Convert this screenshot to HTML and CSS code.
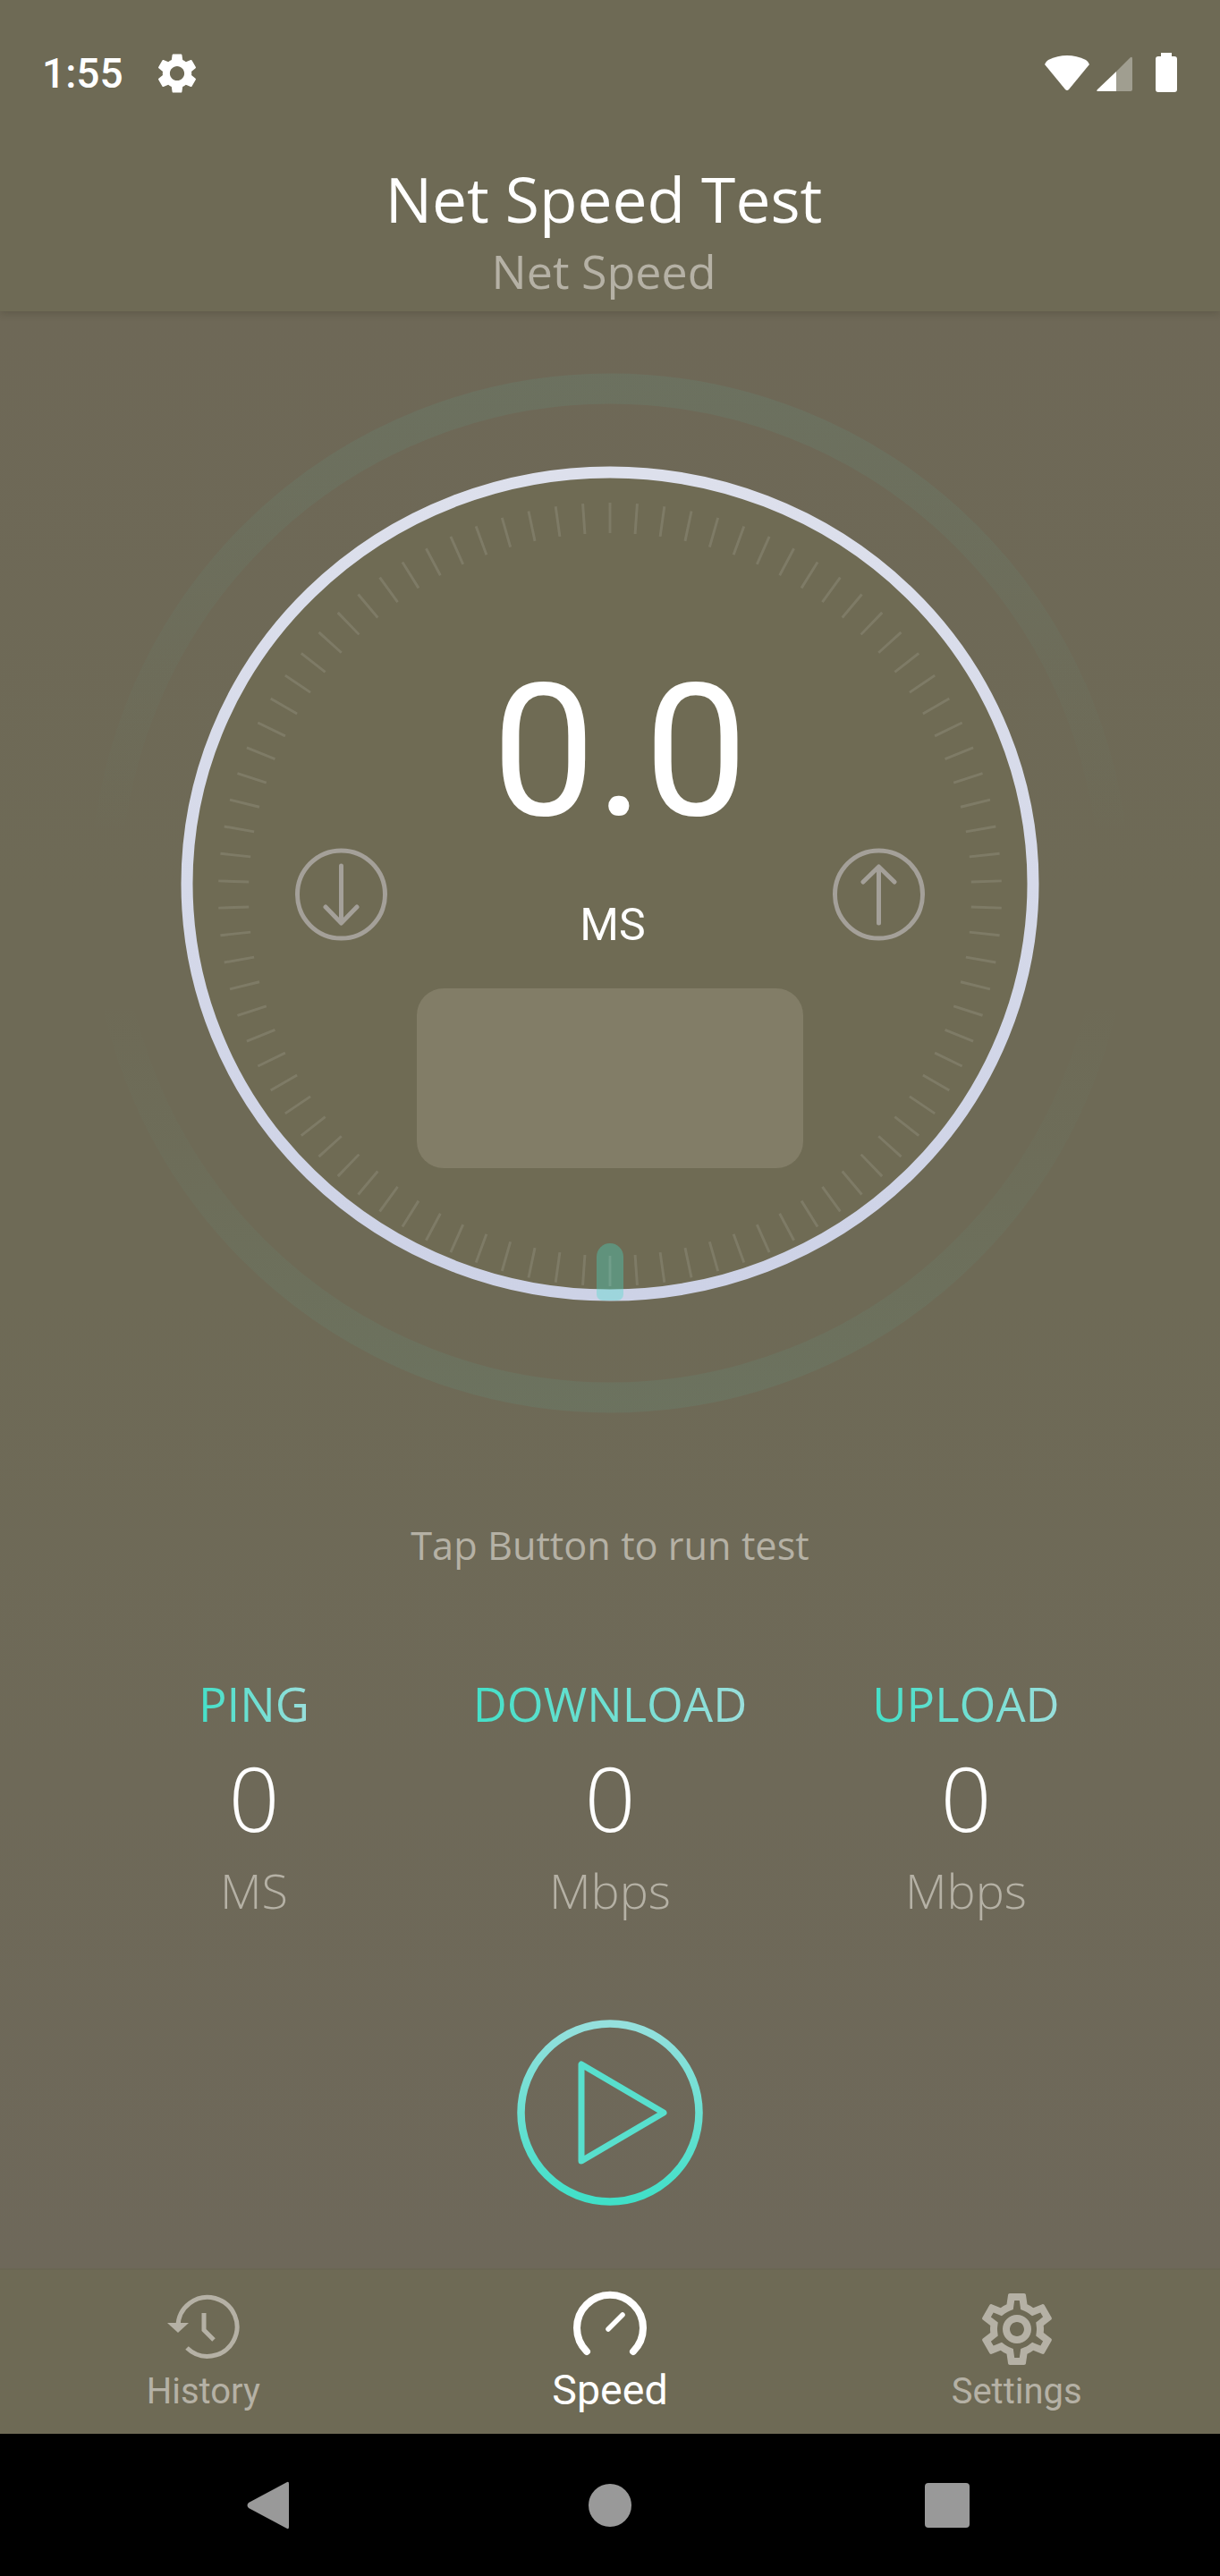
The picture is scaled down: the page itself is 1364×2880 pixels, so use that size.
FILE: index.html
```html
<!DOCTYPE html>
<html lang="en">

<head>
    <meta charset="UTF-8">
    <meta name="viewport" content="width=device-width, initial-scale=1.0">
    <title>Net Speed Test</title>
    <link rel="stylesheet" href="styles.css">
</head>

<body>

    <header class="topbar">
        <div class="status">
            <span class="time">1:55</span>
            <svg class="status-gear" viewBox="0 0 24 24">
                <path fill="#fff" d="M19.14 12.94c.04-.3.06-.61.06-.94 0-.32-.02-.64-.07-.94l2.03-1.58c.18-.14.23-.41.12-.61l-1.92-3.32c-.12-.22-.37-.29-.59-.22l-2.39.96c-.5-.38-1.03-.7-1.62-.94l-.36-2.54c-.04-.24-.24-.41-.48-.41h-3.84c-.24 0-.43.17-.47.41l-.36 2.54c-.59.24-1.13.57-1.62.94l-2.39-.96c-.22-.08-.47 0-.59.22L2.74 8.87c-.12.21-.08.47.12.61l2.03 1.58c-.05.3-.09.63-.09.94s.02.64.07.94l-2.03 1.58c-.18.14-.23.41-.12.61l1.92 3.32c.12.22.37.29.59.22l2.39-.96c.5.38 1.03.7 1.62.94l.36 2.54c.05.24.24.41.48.41h3.84c.24 0 .44-.17.47-.41l.36-2.54c.59-.24 1.13-.56 1.62-.94l2.39.96c.22.08.47 0 .59-.22l1.92-3.32c.12-.22.07-.47-.12-.61l-2.01-1.58zM12 15.6c-1.98 0-3.6-1.62-3.6-3.6s1.62-3.6 3.6-3.6 3.6 1.62 3.6 3.6-1.62 3.6-3.6 3.6z" />
            </svg>
            <svg class="status-icons" viewBox="0 0 150 46">
                <path fill="#fff" d="M1 13Q2 10 5 8Q26 -2 47 8Q50 10 51 13L28 41Q26 43 24 41Z" />
                <path fill="#fff" fill-opacity=".35" d="M81 21L96 6Q99 3 99 7V41Q99 43 97 43H81Z" />
                <path fill="#fff" d="M81 21V43H61Q58 43 60 41Z" />
                <path fill="#fff" d="M131 0H143V4H146Q149 4 149 7V41Q149 44 146 44H128Q125 44 125 41V7Q125 4 128 4H131Z" />
            </svg>
        </div>
        <h1 class="title">Net Speed Test</h1>
        <p class="subtitle">Net Speed</p>
    </header>

    <main class="content">
        <section class="gauge">
            <svg class="dial" viewBox="0 348 1364 1300">
                <defs>
                    <linearGradient id="halo" x1="0" y1="0" x2="0" y2="1">
                        <stop offset="0" stop-color="#55c8b4" stop-opacity=".09" />
                        <stop offset=".3" stop-color="#55c8b4" stop-opacity=".03" />
                        <stop offset=".45" stop-color="#55c8b4" stop-opacity="0" />
                        <stop offset=".6" stop-color="#55c8b4" stop-opacity="0" />
                        <stop offset=".75" stop-color="#55c8b4" stop-opacity=".03" />
                        <stop offset="1" stop-color="#55c8b4" stop-opacity=".09" />
                    </linearGradient>
                    <linearGradient id="ringline" x1="0" y1="0" x2="0" y2="1">
                        <stop offset="0" stop-color="#dde0ec" />
                        <stop offset="1" stop-color="#cdd2e6" />
                    </linearGradient>
                </defs>
                <circle class="halo" cx="682" cy="998.5" r="564" />
                <ellipse class="ring" cx="682" cy="988" rx="473" ry="460" />
                <path class="needle" d="M667 1405a15 15 0 0 1 30 0V1447a7 7 0 0 1 -7 7H674a7 7 0 0 1 -7 -7Z" />
                <circle class="ticks" cx="682" cy="1000" r="421" pathLength="360" />
                <g class="arrow">
                    <circle cx="381.5" cy="1000" r="49" />
                    <path d="M381.5 968V1031M364 1014L381.5 1032L399 1014" />
                    <circle cx="982.5" cy="1000" r="49" />
                    <path d="M982.5 1032V970M965 986L982.5 969L1000 986" />
                </g>
            </svg>
            <div class="reading">
                <div class="value">0.0</div>
                <div class="unit">MS</div>
                <div class="panel"></div>
            </div>
        </section>

        <p class="hint">Tap Button to run test</p>

        <section class="stats">
            <div class="stat">
                <span class="stat-name">PING</span>
                <span class="stat-num">0</span>
                <span class="stat-unit">MS</span>
            </div>
            <div class="stat">
                <span class="stat-name">DOWNLOAD</span>
                <span class="stat-num">0</span>
                <span class="stat-unit">Mbps</span>
            </div>
            <div class="stat">
                <span class="stat-name">UPLOAD</span>
                <span class="stat-num">0</span>
                <span class="stat-unit">Mbps</span>
            </div>
        </section>

        <div class="play">
            <svg class="play-icon" viewBox="0 0 208 208">
                <defs>
                    <linearGradient id="playline" x1="0" y1="0" x2="0" y2="1">
                        <stop offset="0" stop-color="#95e0dd" />
                        <stop offset="1" stop-color="#40e0c8" />
                    </linearGradient>
                </defs>
                <circle cx="104" cy="104" r="99.5" fill="none" stroke="url(#playline)" stroke-width="8.5" />
                <path d="M72 50V158L164 104Z" fill="none" stroke="#58dfcd" stroke-width="7" stroke-linejoin="round" />
            </svg>
        </div>
    </main>

    <nav class="tabs">
        <div class="tab">
            <svg class="tab-history" viewBox="0 0 94 84">
                <path d="M19 41A33 33 0 1 1 29 65M48 26V45L59 56" fill="none" stroke="#b5b1a5" stroke-width="5" />
                <path d="M7 37H31L19 48Z" fill="#b5b1a5" />
            </svg>
            <span class="tab-label">History</span>
        </div>
        <div class="tab active">
            <svg class="tab-speed" viewBox="0 0 90 84">
                <path d="M19 70A37 37 0 1 1 71 70" fill="none" stroke="#fff" stroke-width="8" stroke-linecap="round" />
                <path d="M43 45L59 29" fill="none" stroke="#fff" stroke-width="5.5" stroke-linecap="round" />
            </svg>
            <span class="tab-label">Speed</span>
        </div>
        <div class="tab">
            <svg class="tab-gear" viewBox="0 0 24 24">
                <path fill="#b5b1a5" d="M19.43 12.98c.04-.32.07-.64.07-.98 0-.34-.03-.66-.07-.98l2.11-1.65c.19-.15.24-.42.12-.64l-2-3.46c-.09-.16-.26-.25-.44-.25-.06 0-.12.01-.17.03l-2.49 1c-.52-.4-1.08-.73-1.69-.98l-.38-2.65C14.46 2.18 14.25 2 14 2h-4c-.25 0-.46.18-.49.42l-.38 2.65c-.61.25-1.17.59-1.69.98l-2.49-1c-.06-.02-.12-.03-.18-.03-.17 0-.34.09-.43.25l-2 3.46c-.13.22-.07.49.12.64l2.11 1.65c-.04.32-.07.65-.07.98 0 .33.03.66.07.98l-2.11 1.65c-.19.15-.24.42-.12.64l2 3.46c.09.16.26.25.44.25.06 0 .12-.01.17-.03l2.49-1c.52.4 1.08.73 1.69.98l.38 2.65c.03.24.24.42.49.42h4c.25 0 .46-.18.49-.42l.38-2.65c.61-.25 1.17-.59 1.69-.98l2.49 1c.06.02.12.03.18.03.17 0 .34-.09.43-.25l2-3.46c.12-.22.07-.49-.12-.64l-2.11-1.65zm-1.98-1.71c.04.31.05.52.05.73 0 .21-.02.43-.05.73l-.14 1.13.89.7 1.08.84-.7 1.21-1.27-.51-1.04-.42-.9.68c-.43.32-.84.56-1.25.73l-1.06.43-.16 1.13-.2 1.35h-1.4l-.19-1.35-.16-1.13-1.06-.43c-.43-.18-.83-.41-1.23-.71l-.91-.7-1.06.43-1.27.51-.7-1.21 1.08-.84.89-.7-.14-1.13c-.03-.31-.05-.54-.05-.74s.02-.43.05-.73l.14-1.13-.89-.7-1.08-.84.7-1.21 1.27.51 1.04.42.9-.68c.43-.32.84-.56 1.25-.73l1.06-.43.16-1.13.2-1.35h1.39l.19 1.35.16 1.13 1.06.43c.43.18.83.41 1.23.71l.91.7 1.06-.43 1.27-.51.7 1.21-1.07.85-.89.7.14 1.13zM12 8c-2.21 0-4 1.79-4 4s1.79 4 4 4 4-1.79 4-4-1.79-4-4-4zm0 6c-1.1 0-2-.9-2-2s.9-2 2-2 2 .9 2 2-.9 2-2 2z" />
            </svg>
            <span class="tab-label">Settings</span>
        </div>
    </nav>

    <footer class="navbar">
        <svg class="nav-back" viewBox="0 0 50 56">
            <path d="M46 2Q48 1 48 4V52Q48 55 46 54L3 31Q0 28 3 25Z" fill="#999" />
        </svg>
        <span class="nav-home"></span>
        <span class="nav-recent"></span>
    </footer>

</body>

</html>
```

FILE: styles.css
```css
* {
    box-sizing: border-box;
}

html,
body {
    margin: 0;
    padding: 0;
}

body {
    width: 1364px;
    height: 2880px;
    display: flex;
    flex-direction: column;
    overflow: hidden;
    font-family: "Open Sans", sans-serif;
    background: #6e6a55;
    color: #fff;
}

/* top */
.topbar {
    height: 348px;
    flex: none;
    background: #6e6a55;
    box-shadow: 0 2px 8px rgba(60, 55, 40, .3);
    position: relative;
    z-index: 1;
    text-align: center;
}

.status {
    height: 164px;
    display: flex;
    align-items: center;
    padding: 0 47px;
}

.time {
    font-family: Roboto, sans-serif;
    font-size: 46px;
    font-weight: 500;
}

.status-gear {
    width: 54px;
    height: 54px;
    margin-left: 33px;
}

.status-icons {
    width: 150px;
    height: 46px;
    margin-left: auto;
}

.title {
    margin: 18px 0 0;
    font-size: 69.5px;
    font-weight: 400;
    line-height: 80px;
    padding-right: 14px;
}

.subtitle {
    margin: 6px 0 0;
    font-size: 52px;
    line-height: 70px;
    color: #b5b1a5;
    padding-right: 14px;
}

/* dial */
.content {
    flex: 1;
    background: linear-gradient(#6e6857, #6e6a56 30%, #6e6a56 50%, #6e685a);
}

.gauge {
    height: 1300px;
    position: relative;
}

.dial {
    position: absolute;
    left: 0;
    top: 0;
    width: 1364px;
    height: 1300px;
}

.halo {
    fill: none;
    stroke: url(#halo);
    stroke-width: 34;
}

.ring {
    fill: #6f6b54;
    stroke: url(#ringline);
    stroke-width: 13;
}

.needle {
    fill: rgba(70, 220, 200, .35);
}

.ticks {
    fill: none;
    stroke: rgba(255, 255, 255, .11);
    stroke-width: 34;
    stroke-dasharray: .4 3.6;
    stroke-dashoffset: -1.8;
}

.arrow circle,
.arrow path {
    fill: none;
    stroke: #a4a099;
    stroke-width: 5;
    stroke-linecap: round;
    stroke-linejoin: round;
}

.reading {
    position: relative;
    display: flex;
    flex-direction: column;
    align-items: center;
    padding-top: 383px;
}

.value {
    font-family: Roboto, sans-serif;
    font-size: 206px;
    line-height: 220px;
    padding-left: 22px;
}

.unit {
    font-family: Roboto, sans-serif;
    font-size: 50px;
    line-height: 60px;
    margin-top: 53px;
    padding-left: 6px;
}

.panel {
    width: 432px;
    height: 201px;
    margin-top: 41px;
    border-radius: 30px;
    background: #827d67;
}

/* stats */
.hint {
    margin: 50px 0 0;
    font-size: 43.3px;
    line-height: 60px;
    text-align: center;
    color: #b5b1a5;
}

.stats {
    display: grid;
    grid-template-columns: repeat(3, 398px);
    padding: 0 85px;
    margin-top: 114px;
}

.stat {
    display: flex;
    flex-direction: column;
    align-items: center;
}

.stat-name {
    font-size: 52.5px;
    line-height: 66px;
    background: linear-gradient(to right, #43e0c8, #9adfdc);
    -webkit-background-clip: text;
    background-clip: text;
    color: transparent;
}

.stat-num {
    font-size: 100px;
    font-weight: 300;
    line-height: 124px;
    margin: 9px 0;
}

.stat-unit {
    font-size: 54px;
    font-weight: 300;
    line-height: 66px;
    color: #b5b1a5;
}

.play {
    display: flex;
    justify-content: center;
    margin-top: 112px;
}

.play-icon {
    width: 208px;
    height: 208px;
}

/* bottom */
.tabs {
    height: 185px;
    flex: none;
    display: grid;
    grid-template-columns: repeat(3, 1fr);
    background: #6e6a55;
    border-top: 2px solid #6a6653;
}

.tab {
    display: flex;
    flex-direction: column;
    align-items: center;
    justify-content: flex-end;
    padding-bottom: 22px;
    font-family: Roboto, sans-serif;
    font-size: 40px;
    color: #b5b1a5;
}

.tab.active {
    color: #fff;
    font-size: 46.5px;
    padding-bottom: 24px;
}

.tab-label {
    line-height: 50px;
}

.tab-history {
    width: 94px;
    height: 84px;
    margin-bottom: 5px;
}

.tab-speed {
    width: 90px;
    height: 84px;
    margin-bottom: 4px;
}

.tab-gear {
    width: 96px;
    height: 96px;
    margin-bottom: -3px;
}

.navbar {
    height: 159px;
    flex: none;
    background: #000;
    display: flex;
    align-items: center;
    justify-content: center;
    gap: 333px;
    padding-right: 5px;
}

.nav-back {
    width: 50px;
    height: 56px;
}

.nav-home {
    width: 48px;
    height: 48px;
    border-radius: 50%;
    background: #999;
}

.nav-recent {
    width: 50px;
    height: 50px;
    border-radius: 4px;
    background: #999;
    margin-left: -5px;
}
```
